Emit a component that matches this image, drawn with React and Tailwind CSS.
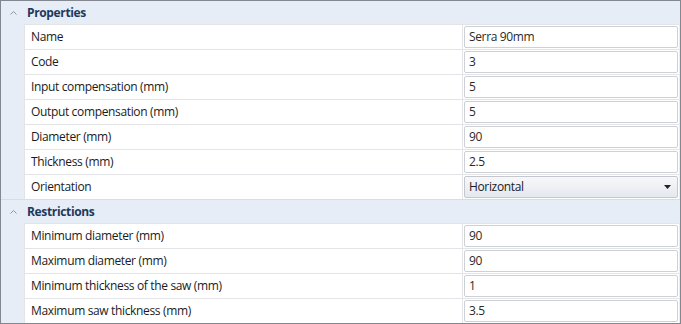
import React from 'react';

const sections = [
    {
        title: 'Properties',
        rows: [
            { label: 'Name', value: 'Serra 90mm' },
            { label: 'Code', value: '3' },
            { label: 'Input compensation (mm)', value: '5' },
            { label: 'Output compensation (mm)', value: '5' },
            { label: 'Diameter (mm)', value: '90' },
            { label: 'Thickness (mm)', value: '2.5' },
            { label: 'Orientation', value: 'Horizontal', select: true },
        ],
    },
    {
        title: 'Restrictions',
        rows: [
            { label: 'Minimum diameter (mm)', value: '90' },
            { label: 'Maximum diameter (mm)', value: '90' },
            { label: 'Minimum thickness of the saw (mm)', value: '1' },
            { label: 'Maximum saw thickness (mm)', value: '3.5' },
        ],
    },
];

const Chevron = () => (
    <svg width="9" height="6" viewBox="0 0 9 6" className="text-[#8d96a2]">
        <path d="M1.5 4.5 L4.5 1.5 L7.5 4.5" fill="none" stroke="currentColor" strokeWidth="1" />
    </svg>
);

const Row = ({ label, value, select }) => (
    <div className="flex h-[25px] border-t border-[#e2e4e8] bg-white">
        <div className="w-[438px] border-r border-[#e2e4e8] pl-[6px] flex items-center text-[#1b1b1b]">
            {label}
        </div>
        <div className="flex-1 flex items-center pl-[1px] pr-[1px]">
            {select ? (
                <div className="relative flex items-center h-[22px] w-full rounded-[2px] border border-[#c4c8ce] bg-gradient-to-b from-[#f7f8fa] to-[#e4e9ef] pl-[4px] text-[#1b1b1b]">
                    {value}
                    <svg width="7" height="4" viewBox="0 0 7 4" className="absolute right-[6px] top-[8px]">
                        <path d="M0 0 H7 L3.5 4 Z" fill="#222" />
                    </svg>
                </div>
            ) : (
                <div className="flex items-center h-[22px] w-full rounded-[2px] border border-[#cdd1d6] bg-white pl-[4px] text-[#2a2a2a]">
                    {value}
                </div>
            )}
        </div>
    </div>
);

const App = () => {
    return (
        <div
            className="w-[681px] h-[324px] border border-[#828790] bg-[#e6edf7] overflow-hidden text-[12px] leading-none tracking-[-0.35px]"
            style={{ fontFamily: '"Segoe UI", "Open Sans", sans-serif' }}
        >
            {sections.map((section, i) => (
                <div key={section.title}>
                    <div className={`flex items-center h-[23px] ${i > 0 ? 'h-[24px] border-t border-[#d6dde6]' : ''}`}>
                        <div className="w-[23px] flex justify-center pl-[1px]">
                            <Chevron />
                        </div>
                        <span className="pl-[3px] font-bold text-[#1e395b]">{section.title}</span>
                    </div>
                    <div className="ml-[23px] border-l border-[#e2e4e8] mr-[1px]">
                        {section.rows.map((row) => (
                            <Row key={row.label} {...row} />
                        ))}
                    </div>
                </div>
            ))}
        </div>
    );
};

export default App;
